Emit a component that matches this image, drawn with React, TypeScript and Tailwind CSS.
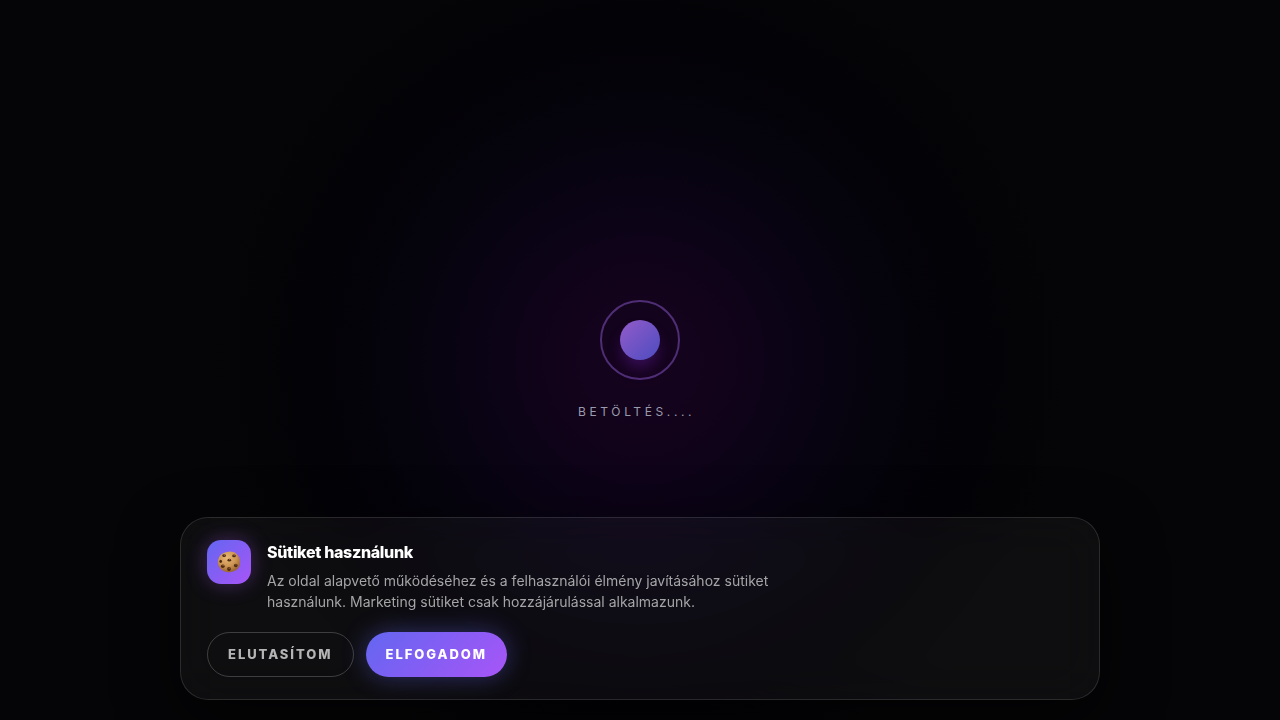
const CookieIcon = () => {
  return (
    <svg viewBox="0 0 22 22" className="size-6" aria-hidden="true">
      <defs>
        <radialGradient id="dough" cx="0.42" cy="0.3" r="0.75">
          <stop offset="0" stopColor="#e8b876" />
          <stop offset="0.55" stopColor="#cb9352" />
          <stop offset="1" stopColor="#8f5a2a" />
        </radialGradient>
      </defs>
      <path
        d="M11 1.5c2.6-.1 5.2.5 7.2 2.3 2.1 1.8 3.2 4.5 3.1 7.2-.1 2.9-1.2 5.5-3.4 7.2-2 1.6-4.5 2.3-7.1 2.2-2.7 0-5.2-.9-7.1-2.7C1.700 15.900.7 13.500.8 10.800c.1-2.700 1.200-5.200 3.300-7C6 2.200 8.500 1.600 11 1.500Z"
        fill="url(#dough)"
      />
      <g fill="#4d2a14">
        <ellipse cx="6.5" cy="5.2" rx="1.7" ry="1.3" />
        <ellipse cx="15.6" cy="5.4" rx="1.7" ry="1.3" />
        <ellipse cx="11.3" cy="9.3" rx="1.7" ry="1.3" />
        <ellipse cx="3.4" cy="10.4" rx="1.2" ry="1.5" />
        <ellipse cx="5.3" cy="14.8" rx="1.7" ry="1.6" />
        <ellipse cx="17.2" cy="14.2" rx="1.7" ry="1.6" />
        <ellipse cx="11" cy="17.4" rx="1.7" ry="1.8" />
      </g>
      <g fill="#a0683a">
        <circle cx="6.8" cy="4.7" r="0.6" />
        <circle cx="15.8" cy="4.9" r="0.6" />
        <circle cx="11.5" cy="8.7" r="0.6" />
        <circle cx="5.6" cy="14.2" r="0.6" />
        <circle cx="17.4" cy="13.6" r="0.6" />
        <circle cx="11.2" cy="16.7" r="0.6" />
      </g>
    </svg>
  );
};

const Loader = () => {
  return (
    <div role="status" className="flex flex-col items-center gap-6">
      <div className="flex size-20 items-center justify-center rounded-full border-2 border-[#4f2e76]">
        <div className="size-10 rounded-full bg-linear-[135deg] from-[#945bc9] to-[#4c4cc0] shadow-[0_10px_15px_-3px_rgba(126,34,206,0.35)]" />
      </div>
      <p className="text-xs tracking-[0.3em] text-[#9a9bad] uppercase">
        Betöltés.
        <span className="inline-block w-7 text-left">...</span>
      </p>
    </div>
  );
};

const CookieBanner = () => {
  return (
    <section
      aria-labelledby="cookie-title"
      className="fixed inset-x-5 bottom-5 mx-auto max-w-[920px] rounded-[28px] border border-white/12 bg-white/4 px-[26px] py-[22px] shadow-[0_20px_60px_rgba(0,0,0,0.6)] backdrop-blur-xl"
    >
      <div className="flex items-start gap-4">
        <div className="flex size-11 shrink-0 items-center justify-center rounded-[14px] bg-linear-[135deg] from-[#6366f1] to-[#a855f7] shadow-[0_0_20px_rgba(168,85,247,0.35)]">
          <CookieIcon />
        </div>
        <div>
          <h2 id="cookie-title" className="mb-1.5 text-base font-extrabold tracking-[-0.02em] text-white">
            Sütiket használunk
          </h2>
          <p className="max-w-[520px] text-sm leading-[21px] text-[#a5a5a7]">
            Az oldal alapvető működéséhez és a felhasználói élmény javításához sütiket használunk.
            Marketing sütiket csak hozzájárulással alkalmazunk.
          </p>
        </div>
      </div>

      <div className="mt-5 flex flex-wrap gap-3">
        <button
          type="button"
          className="h-[45px] rounded-full border border-white/20 px-5 text-[13px] font-extrabold tracking-[0.15em] text-[#b4b4b5] uppercase"
        >
          Elutasítom
        </button>
        <button
          type="button"
          className="h-[45px] rounded-full bg-linear-[135deg] from-[#6366f1] to-[#a855f7] px-5 text-[13px] font-extrabold tracking-[0.15em] text-white uppercase shadow-[0_0_24px_rgba(99,102,241,0.4)]"
        >
          Elfogadom
        </button>
      </div>
    </section>
  );
};

export default function App() {
  return (
    <main className="flex min-h-screen items-center justify-center bg-[#050507] bg-[radial-gradient(circle_at_center,#16031f_0px,#11031a_90px,#0a0315_160px,#05030c_240px,#030206_340px,#050507_430px)] font-['Inter','Liberation_Sans',sans-serif]">
      <Loader />
      <CookieBanner />
    </main>
  );
}
